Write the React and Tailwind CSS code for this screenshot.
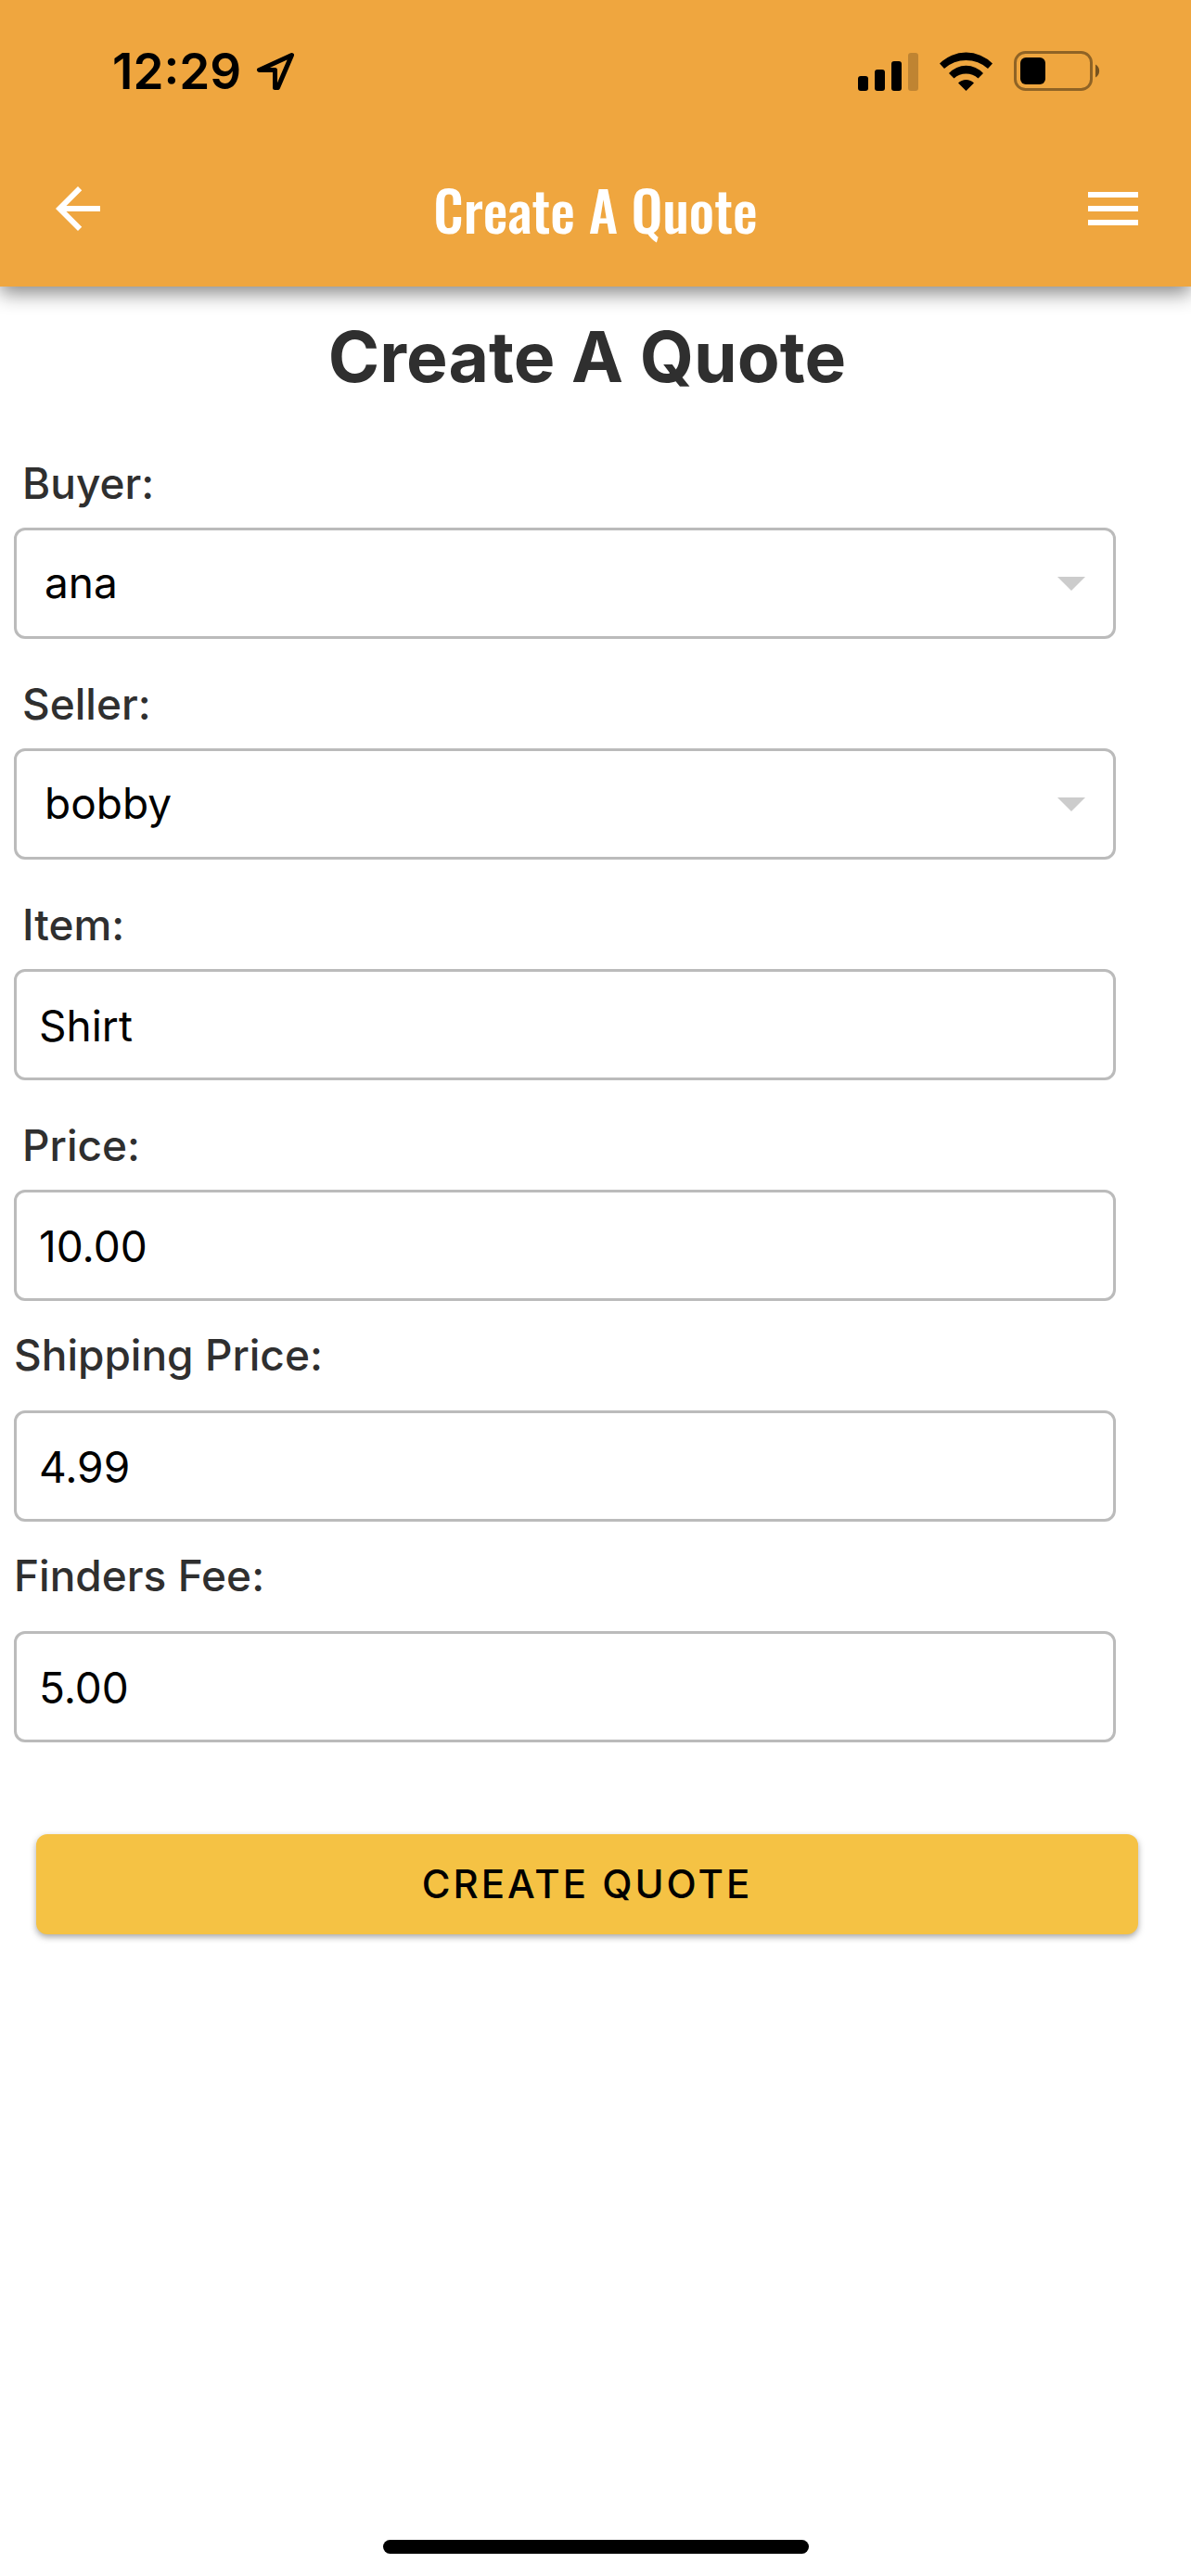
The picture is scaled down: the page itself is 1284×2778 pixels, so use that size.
import { useState } from "react";

const BUYERS = ["ana", "bobby", "carla"];
const SELLERS = ["bobby", "ana", "carla"];

const CONTROL =
  "block w-full h-[120px] rounded-xl border-3 border-[#bbbbbb] bg-transparent text-[46px] text-black outline-none";

function StatusBar() {
  return (
    <div className="flex h-[141px] items-center justify-between pt-3 pl-[121px] pr-[97px] text-black">
      <div className="flex items-center gap-4">
        <span className="text-[53px] leading-[60px] font-semibold">12:29</span>
        <svg width="42" height="42" viewBox="0 0 42 42" fill="none" stroke="currentColor" strokeWidth="5" strokeLinejoin="round">
          <path d="M38.5 3.5L3.5 19.5H20.5V38.5H23.5Z" />
        </svg>
      </div>

      <div className="flex items-center gap-[23px]">
        <svg width="65" height="42" viewBox="0 0 65 42" fill="currentColor">
          <rect x="0" y="26" width="11" height="16" rx="3" />
          <rect x="18" y="19" width="11" height="23" rx="3" />
          <rect x="36" y="10" width="11" height="32" rx="3" />
          <rect x="54" y="1" width="11" height="41" rx="3" opacity="0.2" />
        </svg>
        <svg width="57" height="42" viewBox="0 0 57 42" fill="currentColor">
          <path d="M0 12.5A40 40 0 0 1 57 12.5L52 18A35 35 0 0 0 5 18Z" />
          <path d="M10 23A25 25 0 0 1 47 23L41.5 28.5A19.5 19.5 0 0 0 15.5 28.5Z" />
          <path d="M20 33.5A12 12 0 0 1 37 33.5L28.5 42Z" />
        </svg>
        <svg width="94" height="43" viewBox="0 0 94 43" fill="none">
          <rect x="1.5" y="1.5" width="82" height="40" rx="11" stroke="black" strokeWidth="3" opacity="0.4" />
          <rect x="7" y="7" width="27" height="29" rx="6" fill="black" />
          <path d="M88 14.5A8 8 0 0 1 88 28.5Z" fill="black" opacity="0.5" />
        </svg>
      </div>
    </div>
  );
}

function Header() {
  return (
    <header className="relative z-10 bg-[#efa63f] shadow-[0_7px_20px_rgba(0,0,0,0.48)]">
      <StatusBar />
      <div className="flex h-[168px] items-center justify-between px-12 text-white">
        <button type="button" aria-label="Back">
          <svg width="72" height="72" viewBox="0 0 24 24" fill="currentColor">
            <path d="M20 11H7.83l5.59-5.59L12 4l-8 8 8 8 1.41-1.41L7.83 13H20v-2z" />
          </svg>
        </button>
        <div className="font-['Oswald',sans-serif] text-[60px] leading-[72px] font-medium">
          Create A Quote
        </div>
        <button type="button" aria-label="Menu">
          <svg width="72" height="72" viewBox="0 0 24 24" fill="currentColor">
            <path d="M3 18h18v-2H3v2zm0-5h18v-2H3v2zm0-7v2h18V6H3z" />
          </svg>
        </button>
      </div>
    </header>
  );
}

// flush labels sit on the field's left edge, a little higher than the others
function Field({ id, label, flush = false, children }) {
  return (
    <div>
      <label
        htmlFor={id}
        className={`block text-[46px] leading-[60px] font-medium text-[#2f2f2f] ${
          flush ? "pt-7 pb-[30px]" : "pt-10 pb-[18px] pl-[9px]"
        }`}
      >
        {label}
      </label>
      {children}
    </div>
  );
}

function SelectField({ id, label, options, value, onChange }) {
  return (
    <Field id={id} label={label}>
      <div className="relative">
        <select
          id={id}
          value={value}
          onChange={(e) => onChange(e.target.value)}
          className={`${CONTROL} appearance-none pl-[30px] pr-20 pb-0.5`}
        >
          {options.map((o) => (
            <option key={o} value={o}>{o}</option>
          ))}
        </select>
        <svg className="pointer-events-none absolute top-[53px] right-[33px]" width="30" height="15" viewBox="0 0 30 15" fill="#cccccc">
          <path d="M0 0H30L15 15Z" />
        </svg>
      </div>
    </Field>
  );
}

function TextField({ id, label, flush, value, onChange }) {
  return (
    <Field id={id} label={label} flush={flush}>
      <input
        id={id}
        type="text"
        value={value}
        onChange={(e) => onChange(e.target.value)}
        className={`${CONTROL} px-6 pt-0.5`}
      />
    </Field>
  );
}

export default function App() {
  const [quote, setQuote] = useState({
    buyer: "ana",
    seller: "bobby",
    item: "Shirt",
    price: "10.00",
    shipping: "4.99",
    fee: "5.00",
  });
  const set = (key) => (value) => setQuote({ ...quote, [key]: value });

  return (
    <div className="flex min-h-screen flex-col bg-white font-['Inter',sans-serif]">
      <Header />

      <main className="mr-[18px] flex-1 pt-7">
        <h1 className="mb-[18px] text-center text-[75px] leading-[96px] font-bold text-[#2f2f2f]">
          Create A Quote
        </h1>

        <form onSubmit={(e) => e.preventDefault()}>
          <div className="pl-[15px] pr-[63px]">
            <SelectField id="buyer" label="Buyer:" options={BUYERS} value={quote.buyer} onChange={set("buyer")} />
            <SelectField id="seller" label="Seller:" options={SELLERS} value={quote.seller} onChange={set("seller")} />
            <TextField id="item" label="Item:" value={quote.item} onChange={set("item")} />
            <TextField id="price" label="Price:" value={quote.price} onChange={set("price")} />
            <TextField id="shipping" label="Shipping Price:" flush value={quote.shipping} onChange={set("shipping")} />
            <TextField id="fee" label="Finders Fee:" flush value={quote.fee} onChange={set("fee")} />
          </div>

          <div className="px-[39px] pt-[99px]">
            <button
              type="submit"
              className="h-[108px] w-full rounded-xl bg-[#f5c244] pb-0.5 text-[42px] font-medium tracking-[3px] text-black uppercase shadow-[0_3px_7px_rgba(0,0,0,0.35)]"
            >
              Create Quote
            </button>
          </div>
        </form>
      </main>

      {/* Home indicator */}
      <div className="flex justify-center pb-6">
        <div className="h-[15px] w-[459px] rounded-full bg-black" />
      </div>
    </div>
  );
}
